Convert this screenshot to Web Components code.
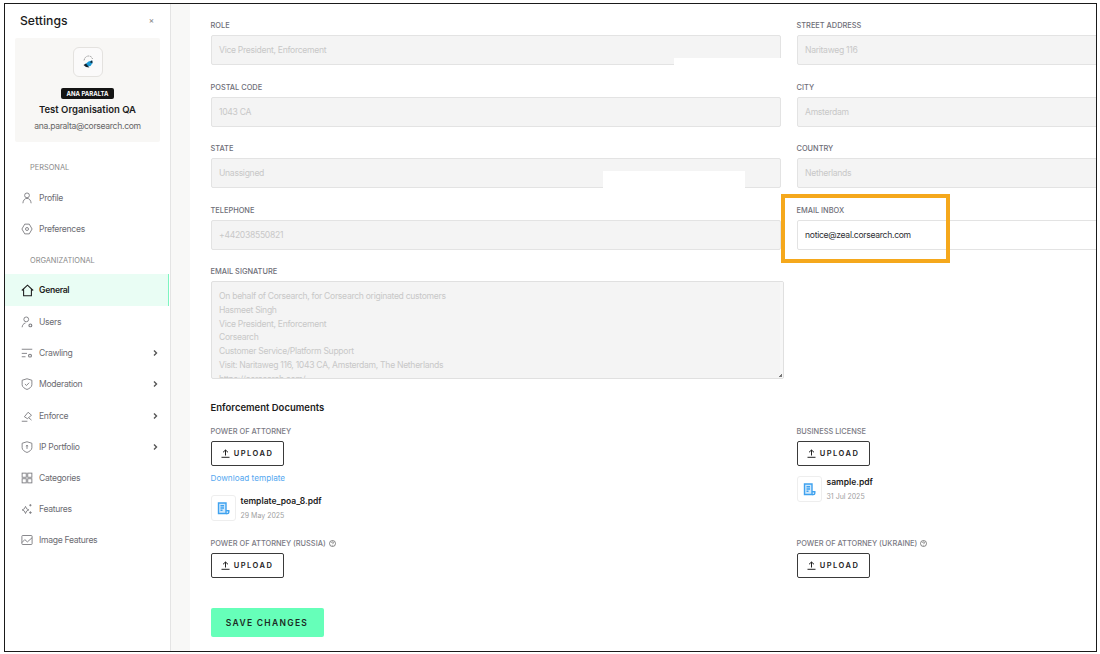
<!DOCTYPE html>
<html>
<head>
<meta charset="utf-8">
<title>Settings</title>
<style>
  html, body { margin: 0; padding: 0; background: #fff; }
  body { font-family: Inter, "Liberation Sans", sans-serif; overflow: hidden; }
</style>
</head>
<body>
<settings-page>
  <settings-sidebar slot="side">
    <nav-group>PERSONAL</nav-group>
    <nav-item icon="user">Profile</nav-item>
    <nav-item icon="gear">Preferences</nav-item>
    <nav-group>ORGANIZATIONAL</nav-group>
    <nav-item icon="home" active>General</nav-item>
    <nav-item icon="users">Users</nav-item>
    <nav-item icon="crawl" more>Crawling</nav-item>
    <nav-item icon="shield" more>Moderation</nav-item>
    <nav-item icon="gavel" more>Enforce</nav-item>
    <nav-item icon="ip" more>IP Portfolio</nav-item>
    <nav-item icon="grid">Categories</nav-item>
    <nav-item icon="spark">Features</nav-item>
    <nav-item icon="image">Image Features</nav-item>
  </settings-sidebar>

  <form-grid>
    <form-field label="ROLE" value="Vice President, Enforcement" disabled></form-field>
    <form-field label="STREET ADDRESS" value="Naritaweg 116" disabled></form-field>
    <form-field label="POSTAL CODE" value="1043 CA" disabled></form-field>
    <form-field label="CITY" value="Amsterdam" disabled></form-field>
    <form-field label="STATE" value="Unassigned" disabled></form-field>
    <form-field label="COUNTRY" value="Netherlands" disabled></form-field>
    <form-field label="TELEPHONE" value="+442038550821" disabled></form-field>
    <form-field label="EMAIL INBOX" value="notice@zeal.corsearch.com"></form-field>
    <signature-field label="EMAIL SIGNATURE">On behalf of Corsearch, for Corsearch originated customers
Hasmeet Singh
Vice President, Enforcement
Corsearch
Customer Service/Platform Support
Visit: Naritaweg 116, 1043 CA, Amsterdam, The Netherlands
https://corsearch.com/</signature-field>
  </form-grid>

  <section-title>Enforcement Documents</section-title>

  <form-grid docs>
    <doc-field label="POWER OF ATTORNEY">
      <a-link>Download template</a-link>
      <file-tile name="template_poa_8.pdf" date="29 May 2025"></file-tile>
    </doc-field>
    <doc-field label="BUSINESS LICENSE">
      <file-tile name="sample.pdf" date="31 Jul 2025" style="margin-top:10px"></file-tile>
    </doc-field>
    <doc-field label="POWER OF ATTORNEY (RUSSIA)" help></doc-field>
    <doc-field label="POWER OF ATTORNEY (UKRAINE)" help></doc-field>
  </form-grid>

  <save-button>SAVE CHANGES</save-button>
</settings-page>

<script>
  const ICONS = {
    user: '<circle cx="8" cy="4.500" r="3.200"/><path d="M2.500 15c.3-4 2.400-6.500 5.500-6.500s5.200 2.500 5.500 6.500"/>',
    gear: '<path d="M5 1.500h6l3.800 6.500-3.800 6.500H5L1.200 8z"/><circle cx="8" cy="8" r="2"/>',
    home: '<path d="M1 8 8 1.500 15 8M3.200 6.200V14.500h9.600V6.200"/>',
    users: '<circle cx="7" cy="4.500" r="3.200"/><path d="M1.500 15c.3-2.800 1.600-5 4.500-5.700"/><circle cx="12.500" cy="12.500" r="1.900" stroke-width="1.500"/>',
    crawl: '<path d="M1 3h14M1 8.500h7M1 13h5"/><circle cx="12" cy="11.500" r="1.900" stroke-width="1.500"/>',
    shield: '<path d="M8 1 14.500 3V9c0 3-3.200 5-6.500 6.300C4.700 14 1.500 12 1.500 9V3z"/><path d="M5.200 8 7.300 10 10.800 6.300"/>',
    gavel: '<path d="M1 15h7.500M4.500 9 9.500 3l4.500 4-5.500 4.500zM10.500 10.500l3.500 3"/>',
    ip: '<path d="M8 1 14.500 3V9c0 3-3.200 5-6.500 6.300C4.700 14 1.500 12 1.500 9V3z"/><path d="M8 6v4.500M6.500 6.800 8 5.800 9.500 6.800"/>',
    grid: '<rect x="1.500" y="1.500" width="5.500" height="5.500"/><rect x="9" y="1.500" width="5.500" height="5.500"/><rect x="1.500" y="9" width="5.500" height="5.500"/><rect x="9" y="9" width="5.500" height="5.500"/>',
    spark: '<path d="M6 4.500 7.500 7.700 10.500 9.200 7.500 10.700 6 14 4.500 10.700 1.500 9.200 4.500 7.700z"/><path d="M12.500 1.500v3M11 3h3M12.500 11v3.500M10.800 12.800h3.500"/>',
    image: '<rect x="1.200" y="2" width="13.600" height="12" rx="1"/><path d="M1.200 11.500 5 7.500 8.500 10.500 14.800 5"/>'
  };

  // Page frame: black outline, sidebar, grey strip and the scrolled form
  class SettingsPage extends HTMLElement {
    constructor() {
      super();
      const shadow = this.attachShadow({ mode: 'open' });
      shadow.innerHTML = `
        <style>
          :host {
            display: flex;
            box-sizing: border-box;
            position: relative;
            width: 1093px;
            height: 649px;
            margin: 3px 0 0 4px;
            border: 1px solid #1a1a1a;
            overflow: hidden;
            background: #fff;
          }
          .strip {
            width: 19px;
            flex: none;
            background: #f8f8f7;
            border-left: 1px solid #e4e4e4;
          }
          .main {
            flex: 1;
            min-width: 0;
            padding: 16px 0 0 20.500px;
            overflow: hidden;
          }
          .cover { position: absolute; background: #fff; }
          .mark {
            position: absolute;
            left: 776px;
            top: 190px;
            width: 169px;
            height: 69px;
            box-sizing: border-box;
            border: 4px solid #f5a81c;
          }
        </style>
        <slot name="side"></slot>
        <div class="strip"></div>
        <div class="main"><slot></slot></div>
        <div class="cover" style="left:669px;top:54px;width:108px;height:8px"></div>
        <div class="cover" style="left:598px;top:167px;width:142px;height:19px"></div>
        <div class="mark"></div>
      `;
    }
  }

  class SettingsSidebar extends HTMLElement {
    constructor() {
      super();
      const shadow = this.attachShadow({ mode: 'open' });
      shadow.innerHTML = `
        <style>
          :host {
            display: block;
            flex: none;
            width: 165px;
            color: #333;
          }
          .head {
            display: flex;
            align-items: center;
            justify-content: space-between;
            height: 32px;
            margin-bottom: 2px;
            padding: 0 16px 0 15px;
            font-size: 12.200px;
            font-weight: 500;
            color: #1c1c1c;
          }
          .close { font-size: 8px; color: #888; }
          .card {
            display: flex;
            flex-direction: column;
            align-items: center;
            box-sizing: border-box;
            height: 104px;
            margin: 0 10px;
            padding-top: 9px;
            background: #f8f7f5;
            border-radius: 2px;
          }
          .logo {
            display: flex;
            align-items: center;
            justify-content: center;
            box-sizing: border-box;
            width: 30px;
            height: 30px;
            border: 1px solid #e4e2df;
            border-radius: 6px;
            background: #fbfafa;
          }
          .badge {
            margin-top: 11px;
            padding: 0 5px;
            height: 11px;
            line-height: 11px;
            background: #141414;
            border-radius: 2px;
            color: #fff;
            font-size: 6px;
            font-weight: 700;
          }
          .org {
            margin-top: 4px;
            line-height: 13px;
            font-size: 9.500px;
            font-weight: 600;
            color: #1c1c1c;
          }
          .mail {
            margin-top: 4px;
            line-height: 12px;
            font-size: 8.600px;
            letter-spacing: -.32px;
            color: #666;
          }
        </style>
        <div class="head"><span>Settings</span><span class="close">×</span></div>
        <div class="card">
          <div class="logo">
            <svg width="18" height="18" viewBox="0 0 18 18">
              <path d="M5 7.500C5.500 4.500 7.500 3 9.500 3s3.500 1 4 3" fill="none" stroke="#8c8c8c" stroke-width=".8" stroke-dasharray="2 .8"/>
              <path d="M13 7.500v3" fill="none" stroke="#8c8c8c" stroke-width=".8"/>
              <path d="M6.500 11 9.500 8.500 13 7.500 13.500 10 11.500 13 8.500 13.500z" fill="#1c9ad6"/>
              <path d="M4.500 12 7 10.500 9 13 10.500 14.500 7 14zM11 9l2-1.500.5 2-1.500.5z" fill="#12222e"/>
            </svg>
          </div>
          <div class="badge">ANA PARALTA</div>
          <div class="org">Test Organisation QA</div>
          <div class="mail">ana.paralta@corsearch.com</div>
        </div>
        <div class="list"><slot></slot></div>
      `;
    }
  }

  class NavGroup extends HTMLElement {
    constructor() {
      super();
      const shadow = this.attachShadow({ mode: 'open' });
      shadow.innerHTML = `
        <style>
          :host {
            display: block;
            height: 16px;
            line-height: 16px;
            margin: 8.600px 0 5px;
            padding-left: 25px;
            font-size: 7.400px;
            color: #8a8a8a;
          }
          :host(:first-child) { margin: 17.500px 0 7px; }
        </style>
        <slot></slot>
      `;
    }
  }

  class NavItem extends HTMLElement {
    constructor() {
      super();
      const shadow = this.attachShadow({ mode: 'open' });
      const icon = ICONS[this.getAttribute('icon')] || '';
      const more = this.hasAttribute('more');
      shadow.innerHTML = `
        <style>
          :host {
            display: flex;
            align-items: center;
            box-sizing: border-box;
            height: 31.200px;
            padding: 0 12px 0 16px;
            font-size: 8.600px;
            letter-spacing: -.3px;
            color: #6c6c72;
          }
          :host([active]) {
            height: 32px;
            background: #e9fdf4;
            border-right: 1px solid #7df5c0;
            margin-right: 1px;
            color: #1c1c1c;
            font-weight: 600;
          }
          svg.ico {
            width: 12px;
            height: 12px;
            flex: none;
            margin-right: 6px;
            fill: none;
            stroke: #7c7c80;
            stroke-width: 1.200;
          }
          :host([active]) svg.ico { stroke: #1c1c1c; width: 13px; height: 13px; margin-right: 5px; stroke-width: 1.300; }
          .text { flex: 1; }
          .chev { width: 5px; height: 6px; fill: none; stroke: #555; stroke-width: 1.400; }
        </style>
        <svg class="ico" viewBox="0 0 16 16">${icon}</svg>
        <span class="text"><slot></slot></span>
        ${more ? '<svg class="chev" viewBox="0 0 5 6"><path d="M1 .5 3.500 3 1 5.500"/></svg>' : ''}
      `;
    }
  }

  class FormGrid extends HTMLElement {
    constructor() {
      super();
      const shadow = this.attachShadow({ mode: 'open' });
      shadow.innerHTML = `
        <style>
          :host {
            display: grid;
            grid-template-columns: 570.500px 310px;
            column-gap: 15.500px;
            row-gap: 16.600px;
          }
          :host([docs]) { row-gap: 17px; }
        </style>
        <slot></slot>
      `;
    }
  }

  class FormField extends HTMLElement {
    constructor() {
      super();
      const shadow = this.attachShadow({ mode: 'open' });
      shadow.innerHTML = `
        <style>
          :host { display: block; }
          .label {
            height: 10px;
            line-height: 12px;
            margin-bottom: 5px;
            font-size: 7.400px;
            font-weight: 500;
            color: #6e6e78;
          }
          .box {
            box-sizing: border-box;
            height: 30px;
            line-height: 28px;
            padding: 0 7.500px;
            border: 1px solid #e3e3e3;
            border-radius: 2px;
            font-size: 8.600px;
            letter-spacing: -.3px;
            color: #2e2e33;
            background: #fff;
          }
          :host([disabled]) .box { background: #f4f4f4; color: #c8c8c8; }
        </style>
        <div class="label">${this.getAttribute('label')}</div>
        <div class="box">${this.getAttribute('value')}</div>
      `;
    }
  }

  class SignatureField extends HTMLElement {
    constructor() {
      super();
      const shadow = this.attachShadow({ mode: 'open' });
      shadow.innerHTML = `
        <style>
          :host { display: block; width: 573.500px; }
          .label {
            height: 10px;
            line-height: 12px;
            margin-bottom: 5px;
            font-size: 7.400px;
            font-weight: 500;
            color: #6e6e78;
          }
          .box {
            position: relative;
            box-sizing: border-box;
            height: 98px;
            padding: 8px 7.500px 0;
            border: 1px solid #e0e0e0;
            border-radius: 2px;
            background: #f4f4f4;
            color: #c8c8c8;
            font-size: 8.600px;
            letter-spacing: -.3px;
            line-height: 13.700px;
            white-space: pre-line;
            overflow: hidden;
          }
          .bar {
            position: absolute;
            right: 0;
            top: 0;
            bottom: 0;
            width: 3px;
            background: #f7f7f7;
          }
          .grip {
            position: absolute;
            right: 1px;
            bottom: 1px;
            width: 3px;
            height: 3px;
            background: linear-gradient(135deg, transparent 50%, #777 50%);
          }
        </style>
        <div class="label">${this.getAttribute('label')}</div>
        <div class="box"><slot></slot><div class="bar"></div><div class="grip"></div></div>
      `;
    }
  }

  class SectionTitle extends HTMLElement {
    constructor() {
      super();
      const shadow = this.attachShadow({ mode: 'open' });
      shadow.innerHTML = `
        <style>
          :host {
            display: block;
            height: 14px;
            line-height: 16px;
            margin: 21px 0 12px;
            font-size: 9.500px;
            font-weight: 600;
            color: #1c1c1c;
          }
        </style>
        <slot></slot>
      `;
    }
  }

  class DocField extends HTMLElement {
    constructor() {
      super();
      const shadow = this.attachShadow({ mode: 'open' });
      const help = this.hasAttribute('help') ? `
        <svg width="7" height="7" viewBox="0 0 7 7" fill="none" stroke="#555" stroke-width=".7">
          <circle cx="3.500" cy="3.500" r="3"/><path d="M2.500 2.800c0-1.200 2-1.200 2 0 0 .7-1 .7-1 1.400M3.500 5v.5"/>
        </svg>` : '';
      shadow.innerHTML = `
        <style>
          :host { display: block; }
          .label {
            display: flex;
            align-items: center;
            gap: 3px;
            height: 11px;
            margin-bottom: 4px;
            font-size: 7.400px;
            font-weight: 500;
            color: #7a7a84;
          }
          button {
            display: flex;
            align-items: center;
            justify-content: center;
            gap: 4px;
            box-sizing: border-box;
            width: 73px;
            height: 25px;
            padding: 0;
            border: 1px solid #3a3a3a;
            border-radius: 2px;
            background: #fff;
            color: #222;
            font: 600 7.500px Inter, "Liberation Sans", sans-serif;
            letter-spacing: 1.500px;
          }
          button svg { fill: none; stroke: #222; stroke-width: 1; }
        </style>
        <div class="label">${this.getAttribute('label')}${help}</div>
        <button>
          <svg width="9" height="9" viewBox="0 0 9 9"><path d="M4.500 6.500V1M2 3.300 4.500 1 7 3.300M.5 8.300h8"/></svg>
          UPLOAD
        </button>
        <slot></slot>
      `;
    }
  }

  class ALink extends HTMLElement {
    constructor() {
      super();
      const shadow = this.attachShadow({ mode: 'open' });
      shadow.innerHTML = `
        <style>
          :host {
            display: block;
            height: 12px;
            line-height: 12px;
            margin-top: 6px;
            font-size: 8.200px;
            color: #55a8f0;
          }
        </style>
        <slot></slot>
      `;
    }
  }

  class FileTile extends HTMLElement {
    constructor() {
      super();
      const shadow = this.attachShadow({ mode: 'open' });
      shadow.innerHTML = `
        <style>
          :host {
            display: flex;
            gap: 5px;
            margin-top: 11px;
            color: #1c1c1c;
          }
          .tile {
            display: flex;
            align-items: center;
            justify-content: center;
            box-sizing: border-box;
            width: 25px;
            height: 26px;
            border: 1px solid #eeeeee;
            border-radius: 3px;
          }
          .name {
            height: 12px;
            line-height: 13px;
            font-size: 8.500px;
            font-weight: 600;
          }
          .date {
            margin-top: 3.500px;
            line-height: 10px;
            font-size: 7px;
            color: #a0a0a0;
          }
        </style>
        <div class="tile">
          <svg width="13" height="13" viewBox="0 0 13 13" fill="none" stroke="#3fa2ef" stroke-width="1.400">
            <path d="M1.500 1h7.500v10.500H1.500z" fill="#cfe8fc"/>
            <path d="M3.500 3.800h3.500M3.500 6h3.500M3.500 8.200h2"/>
            <path d="M9 8.800h2.800v1.400a1.300 1.300 0 0 1-1.300 1.300H9"/>
          </svg>
        </div>
        <div>
          <div class="name">${this.getAttribute('name')}</div>
          <div class="date">${this.getAttribute('date')}</div>
        </div>
      `;
    }
  }

  class SaveButton extends HTMLElement {
    constructor() {
      super();
      const shadow = this.attachShadow({ mode: 'open' });
      shadow.innerHTML = `
        <style>
          :host {
            display: block;
            width: 113px;
            margin-top: 30px;
          }
          button {
            display: block;
            width: 100%;
            height: 29px;
            padding: 0;
            border: none;
            border-radius: 2px;
            background: #66ffb9;
            color: #1c2a24;
            font: 600 8.500px Inter, "Liberation Sans", sans-serif;
            letter-spacing: 1.300px;
          }
        </style>
        <button><slot></slot></button>
      `;
    }
  }

  customElements.define('settings-page', SettingsPage);
  customElements.define('settings-sidebar', SettingsSidebar);
  customElements.define('nav-group', NavGroup);
  customElements.define('nav-item', NavItem);
  customElements.define('form-grid', FormGrid);
  customElements.define('form-field', FormField);
  customElements.define('signature-field', SignatureField);
  customElements.define('section-title', SectionTitle);
  customElements.define('doc-field', DocField);
  customElements.define('a-link', ALink);
  customElements.define('file-tile', FileTile);
  customElements.define('save-button', SaveButton);
</script>
</body>
</html>
